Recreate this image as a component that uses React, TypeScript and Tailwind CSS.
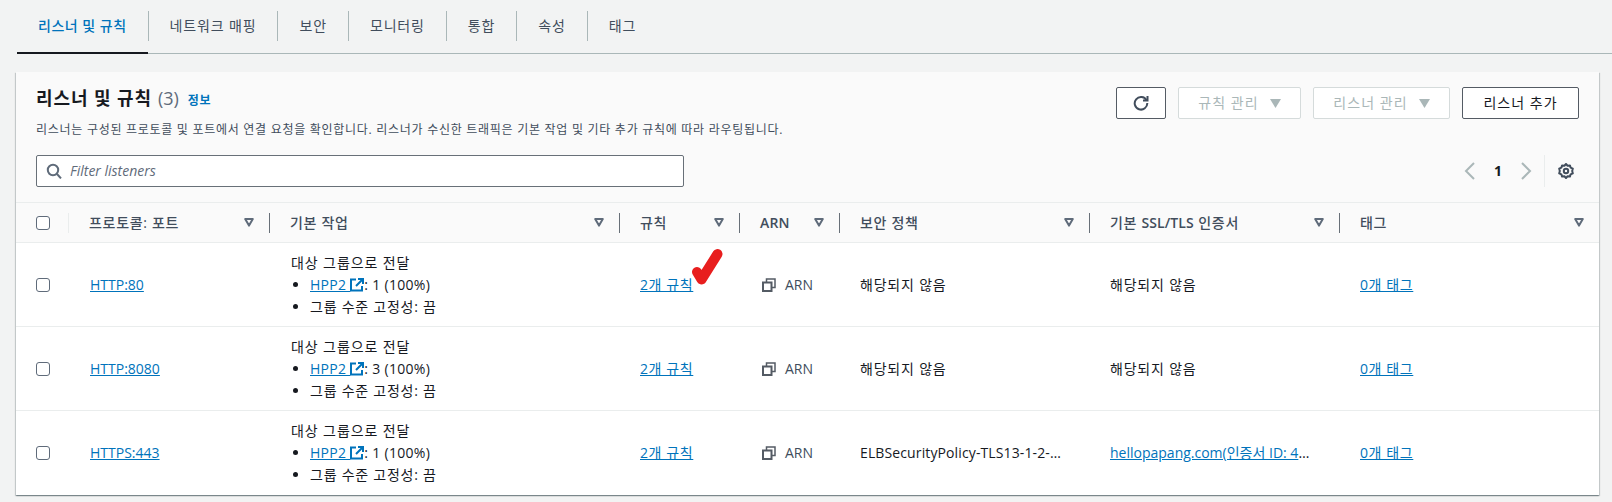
import React from "react";

const FONT = "[font-family:'Open_Sans','Noto_Sans_CJK_KR',sans-serif]";

const tabs = ["리스너 및 규칙", "네트워크 매핑", "보안", "모니터링", "통합", "속성", "태그"];

const columns: { key: string; label: React.ReactNode; width: string }[] = [
  { key: "port", label: "프로토콜: 포트", width: "w-[201px]" },
  { key: "action", label: "기본 작업", width: "w-[350px]" },
  { key: "rules", label: "규칙", width: "w-[120px]" },
  { key: "arn", label: <span className="font-semibold tracking-[0.2px]">ARN</span>, width: "w-[100px]" },
  { key: "policy", label: "보안 정책", width: "w-[250px]" },
  {
    key: "cert",
    label: (
      <>
        기본 <span className="font-semibold tracking-[0.1px]">SSL/TLS</span> 인증서
      </>
    ),
    width: "w-[250px]",
  },
  { key: "tags", label: "태그", width: "w-[259px]" },
];

const rows = [
  { port: "HTTP:80", weight: "1 (100%)", policy: "해당되지 않음", cert: "해당되지 않음", certLink: false, mark: true },
  { port: "HTTP:8080", weight: "3 (100%)", policy: "해당되지 않음", cert: "해당되지 않음", certLink: false, mark: false },
  {
    port: "HTTPS:443",
    weight: "1 (100%)",
    policy: "ELBSecurityPolicy-TLS13-1-2-2021-06",
    cert: "hellopapang.com(인증서 ID: 4f2a91c7-8d36)",
    certLink: true,
    mark: false,
  },
];

function SortIcon() {
  return (
    <svg width="10" height="9" viewBox="0 0 10 9" className="shrink-0">
      <path d="M1.2 1h7.6L5 7.6z" fill="none" stroke="#5f6b7a" strokeWidth="2" strokeLinejoin="round" />
    </svg>
  );
}

function CaretDown() {
  return (
    <svg width="11" height="9" viewBox="0 0 11 9" className="shrink-0">
      <path d="M0 0h11L5.5 9z" fill="#aab7b8" />
    </svg>
  );
}

function Checkbox() {
  return <div className="w-[14px] h-[14px] border border-[#5f6b7a] rounded-[3px] bg-white shrink-0" />;
}

function ExternalIcon() {
  return (
    <svg width="14" height="14" viewBox="0 0 14 14" fill="none" stroke="#0073bb" strokeWidth="2" className="shrink-0">
      <path d="M6 1.5H1v11h11V8" />
      <path d="M8 1h5v5M13 1L6 8" />
    </svg>
  );
}

function CopyIcon() {
  return (
    <svg width="14" height="14" viewBox="0 0 14 14" fill="none" stroke="#545b64" strokeWidth="2" className="shrink-0">
      <rect x="1" y="4.5" width="8.5" height="8.5" />
      <path d="M4.5 4.5V1H13v8.5H9.5" strokeWidth="1.5" />
    </svg>
  );
}

function RefreshIcon() {
  return (
    <svg width="16" height="16" viewBox="0 0 16 16" fill="none" stroke="#414d5c" strokeWidth="2">
      <path d="M13.5 5.2A6.3 6.3 0 1 0 14.3 8" />
      <path d="M14.5 1v4.5H10" />
    </svg>
  );
}

function SearchIcon() {
  return (
    <svg width="16" height="16" viewBox="0 0 16 16" fill="none" stroke="#5f6b7a" strokeWidth="2">
      <circle cx="7" cy="7" r="5.2" />
      <path d="M11 11l4 4.4" />
    </svg>
  );
}

function GearIcon() {
  return (
    <svg width="16" height="16" viewBox="0 0 16 16" fill="none" stroke="#414d5c" strokeWidth="2" strokeLinejoin="round">
      <path d="M8 1l1.6 1.7 2.3-.3.7 2.2 2.2 1-.6 2.4.6 2.4-2.2 1-.7 2.2-2.3-.3L8 15l-1.6-1.7-2.3.3-.7-2.2-2.2-1 .6-2.4-.6-2.4 2.2-1 .7-2.2 2.3.3z" />
      <circle cx="8" cy="8" r="2.2" />
    </svg>
  );
}

function Chevron({ dir }: { dir: "left" | "right" }) {
  return (
    <svg width="12" height="18" viewBox="0 0 12 18" fill="none" stroke="#aab7b8" strokeWidth="2">
      <path d={dir === "left" ? "M10 1L2 9l8 8" : "M2 1l8 8-8 8"} />
    </svg>
  );
}

function RedCheck() {
  return (
    <svg width="34" height="42" viewBox="0 0 34 42" className="absolute left-[50px] top-[-26px]" fill="none">
      <path
        d="M7 24L11.5 31.5L27.5 6"
        stroke="#e81e1e"
        strokeWidth="10"
        strokeLinecap="round"
        strokeLinejoin="round"
      />
    </svg>
  );
}

function Link({ children }: { children: React.ReactNode }) {
  return <a className="text-[#0073bb] underline">{children}</a>;
}

export default function App() {
  return (
    <div className={`w-[1612px] h-[502px] overflow-hidden bg-[#f2f3f3] text-[14px] leading-[22px] text-[#16191f] ${FONT}`}>
      {/* Tabs */}
      <div className="ml-[17px] h-[54px] border-b border-[#aab7b8] flex items-start pt-[11px]">
        {tabs.map((tab, i) => (
          <div
            key={tab}
            className={`relative h-[30px] flex items-center px-[21px] ${i < tabs.length - 1 ? "border-r border-[#aab7b8]" : ""} ${
              i === 0 ? "text-[#0073bb] font-medium tracking-[0.5px]" : "text-[#414d5c] tracking-[0.85px]"
            }`}
          >
            {tab}
            {i === 0 && <div className="absolute left-0 right-0 top-[41px] h-[2px] bg-[#16191f]" />}
          </div>
        ))}
      </div>

      {/* Card */}
      <div className="ml-[16px] mt-[18px] w-[1583px] h-[423px] bg-white shadow-[0_1px_1px_0_rgba(0,28,36,0.3),1px_1px_1px_0_rgba(0,28,36,0.15),-1px_1px_1px_0_rgba(0,28,36,0.15)]">
        <div className="bg-[#fafafa] h-[131px] border-b border-[#eaeded] px-[20px] pt-[15px]">
          <div className="flex justify-between items-start">
            <div>
              <div className="flex items-baseline h-[28px]">
                <span className="text-[18px] font-bold tracking-[0.9px]">리스너 및 규칙</span>
                <span className="text-[18px] text-[#5f6b7a] ml-[6px]">(3)</span>
                <span className="text-[12px] font-bold text-[#0073bb] ml-[9px] tracking-[0.6px]">정보</span>
              </div>
              <p className="text-[12px] leading-[18px] text-[#414d5c] mt-[6px] tracking-[0.72px]">
                리스너는 구성된 프로토콜 및 포트에서 연결 요청을 확인합니다. 리스너가 수신한 트래픽은 기본 작업 및 기타 추가 규칙에 따라 라우팅됩니다.
              </p>
            </div>
            <div className="flex gap-[12px]">
              <button className="w-[50px] h-[32px] border border-[#545b64] rounded-[2px] bg-white flex items-center justify-center">
                <RefreshIcon />
              </button>
              <button className="w-[123px] h-[32px] border border-[#d5dbdb] rounded-[2px] bg-white flex items-center justify-center gap-[11px] text-[#aab7b8] tracking-[1.1px]">
                규칙 관리 <CaretDown />
              </button>
              <button className="w-[137px] h-[32px] border border-[#d5dbdb] rounded-[2px] bg-white flex items-center justify-center gap-[11px] text-[#aab7b8] tracking-[1.1px]">
                리스너 관리 <CaretDown />
              </button>
              <button className="w-[117px] h-[32px] border border-[#545b64] rounded-[2px] bg-white flex items-center justify-center text-[#16191f] tracking-[1px]">
                리스너 추가
              </button>
            </div>
          </div>
          <div className="flex justify-between items-center mt-[16px]">
            <div className="w-[648px] h-[32px] border border-[#687078] rounded-[2px] bg-white flex items-center pl-[9px] gap-[8px]">
              <SearchIcon />
              <span className="italic text-[#5f6b7a]">Filter listeners</span>
            </div>
            <div className="flex items-center h-[32px] mr-[5px]">
              <Chevron dir="left" />
              <span className="font-bold w-[44px] text-center">1</span>
              <Chevron dir="right" />
              <div className="w-px h-[32px] bg-[#eaeded] ml-[12px] mr-[13px]" />
              <GearIcon />
            </div>
          </div>
        </div>

        {/* Table head */}
        <div className="flex h-[40px] items-center bg-[#fafafa] border-b border-[#eaeded]">
          <div className="w-[53px] pl-[20px] h-[20px] flex items-center border-r border-[#eaeded]">
            <Checkbox />
          </div>
          {columns.map((col, i) => (
            <div key={col.key} className={`${col.width} h-[20px] flex items-center justify-between pl-[20px] pr-[15px] ${i < columns.length - 1 ? "border-r border-[#687078]" : ""}`}>
              <span className="font-medium text-[#414d5c] tracking-[0.7px]">{col.label}</span>
              <SortIcon />
            </div>
          ))}
        </div>

        {/* Table rows */}
        {rows.map((row, idx) => (
          <div key={row.port} className={`flex h-[84px] items-center ${idx < rows.length - 1 ? "border-b border-[#eaeded]" : ""}`}>
            <div className="w-[53px] pl-[20px]">
              <Checkbox />
            </div>
            <div className="w-[201px] pl-[21px]">
              <Link>{row.port}</Link>
            </div>
            <div className="w-[350px] pl-[21px]">
              <div className="tracking-[0.9px]">대상 그룹으로 전달</div>
              <ul className="list-disc pl-[19px]">
                <li>
                  <span className="inline-flex items-center tracking-[0.3px]">
                    <Link>HPP2&nbsp;</Link>
                    <ExternalIcon />
                    <span>: {row.weight}</span>
                  </span>
                </li>
                <li className="tracking-[0.75px]">그룹 수준 고정성: 끔</li>
              </ul>
            </div>
            <div className="w-[120px] pl-[20px]">
              <span className="relative inline-block tracking-[0.6px]">
                <Link>2개 규칙</Link>
                {row.mark && <RedCheck />}
              </span>
            </div>
            <div className="w-[100px] pl-[22px] flex items-center gap-[9px] text-[#414d5c]">
              <CopyIcon />
              <span>ARN</span>
            </div>
            <div className={`w-[250px] pl-[20px] pr-[26px] truncate ${idx < 2 ? "tracking-[0.8px]" : "tracking-[0.12px]"}`}>{row.policy}</div>
            <div className={`w-[250px] pl-[20px] pr-[28px] truncate ${idx < 2 ? "tracking-[0.8px]" : ""}`}>
              {row.certLink ? <Link>{row.cert}</Link> : row.cert}
            </div>
            <div className="w-[259px] pl-[20px] tracking-[0.6px]">
              <Link>0개 태그</Link>
            </div>
          </div>
        ))}
      </div>
    </div>
  );
}
